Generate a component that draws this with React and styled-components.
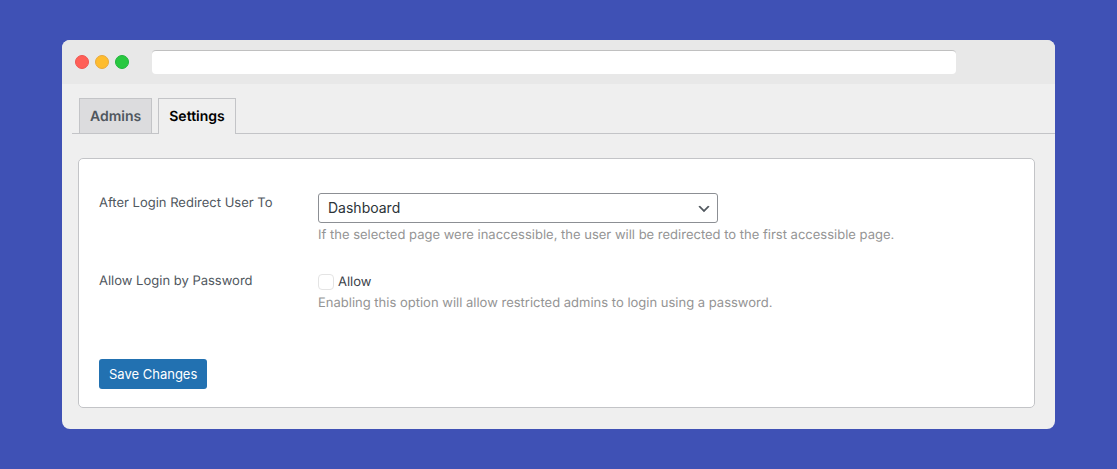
import React from "react";
import styled, { createGlobalStyle } from "styled-components";

const Global = createGlobalStyle`
  * { box-sizing: border-box; }
  body {
    margin: 0;
    background: #3f51b5;
    color: #3c434a;
    font-family: Inter, "Liberation Sans", sans-serif;
    font-size: 13px;
    line-height: 20px;
    text-rendering: geometricPrecision;
  }
`;

const Page = styled.main`
  padding: 40px 62px;
`;

const Browser = styled.section`
  background: #efefef;
  border-radius: 8px;
  overflow: hidden;
`;

const TitleBar = styled.header`
  display: flex;
  align-items: center;
  height: 44px;
  padding: 0 99px 0 13px;
  background: #e8e8e8;
`;

const Lights = styled.div`
  display: flex;
  gap: 6px;
  margin-right: 23px;
`;

const Light = styled.span`
  width: 14px;
  height: 14px;
  border: 1px solid ${(p) => p.$edge};
  border-radius: 50%;
  background: ${(p) => p.$color};
`;

const Address = styled.input`
  flex: 1;
  min-width: 0;
  height: 24px;
  padding: 0 8px;
  border: 0;
  border-top: 1px solid #c0c0c0;
  border-radius: 4px;
  background: #fff;
  font: inherit;
`;

const Tabs = styled.nav`
  display: flex;
  gap: 6px;
  margin-left: 10px;
  padding: 14px 7px 0;
  border-bottom: 1px solid #c3c4c7;
`;

const Tab = styled.a`
  height: ${(p) => (p.$active ? 36 : 35)}px;
  margin-bottom: ${(p) => (p.$active ? -1 : 0)}px;
  padding: 6px 10px;
  border: 1px solid #c3c4c7;
  border-bottom: 0;
  background: ${(p) => (p.$active ? "#efefef" : "#dcdcde")};
  color: ${(p) => (p.$active ? "#000" : "#50575e")};
  font-size: 14px;
  font-weight: 600;
  line-height: 24px;
  text-decoration: none;
`;

const Panel = styled.form`
  margin: 24px 20px 21px 16px;
  padding: 34px 20px 18px;
  border: 1px solid #c3c4c7;
  border-radius: 5px;
  background: #fff;
`;

const Row = styled.div`
  display: grid;
  grid-template-columns: 219px 1fr;
  margin-bottom: ${(p) => p.$gap}px;
`;

const RowLabel = styled.label`
  color: #50575e;
`;

const SelectWrap = styled.div`
  position: relative;
  max-width: 400px;
  margin-bottom: 2px;
`;

const Select = styled.select`
  display: block;
  width: 100%;
  height: 30px;
  padding: 0 24px 0 9px;
  appearance: none;
  border: 1px solid #8c8f94;
  border-radius: 3px;
  background: #fff;
  color: #2c3338;
  font: inherit;
  font-size: 14px;
`;

const Chevron = styled.svg`
  position: absolute;
  top: 8px;
  right: 6px;
  width: 16px;
  height: 16px;
  pointer-events: none;
`;

const Help = styled.p`
  margin: 0;
  color: #949494;
`;

const CheckLabel = styled.label`
  display: flex;
  align-items: center;
  gap: 4px;
  line-height: 22px;
`;

const Checkbox = styled.input`
  width: 16px;
  height: 16px;
  margin: 0;
  appearance: none;
  border: 1px solid #e4e4e4;
  border-radius: 4px;
  background: #fff;

  &:checked { background: #2271b1; }
`;

const Save = styled.button`
  display: block;
  height: 30px;
  padding: 0 10px;
  border: 0;
  border-radius: 3px;
  background: #2271b1;
  color: #fff;
  font: inherit;
`;

export default function App() {
  return (
    <Page>
      <Global />
      <Browser>
        <TitleBar>
          <Lights>
            <Light $color="#ff5f57" $edge="#ee5550" />
            <Light $color="#febc2e" $edge="#e9a93a" />
            <Light $color="#28c840" $edge="#20b43c" />
          </Lights>
          <Address type="text" aria-label="Address" />
        </TitleBar>
        <Tabs>
          <Tab href="#admins">Admins</Tab>
          <Tab href="#settings" $active aria-current="page">Settings</Tab>
        </Tabs>
        <Panel>
          <Row $gap={26}>
            <RowLabel htmlFor="redirect">After Login Redirect User To</RowLabel>
            <div>
              <SelectWrap>
                <Select id="redirect" defaultValue="Dashboard">
                  <option>Dashboard</option>
                </Select>
                <Chevron viewBox="0 0 20 20" aria-hidden="true">
                  <path d="M5 6l5 5 5-5 2 1-7 7-7-7z" fill="#50575e" />
                </Chevron>
              </SelectWrap>
              <Help>If the selected page were inaccessible, the user will be redirected to the first accessible page.</Help>
            </div>
          </Row>
          <Row $gap={46}>
            <RowLabel htmlFor="allow">Allow Login by Password</RowLabel>
            <div>
              <CheckLabel>
                <Checkbox id="allow" type="checkbox" />
                Allow
              </CheckLabel>
              <Help>Enabling this option will allow restricted admins to login using a password.</Help>
            </div>
          </Row>
          <Save type="button">Save Changes</Save>
        </Panel>
      </Browser>
    </Page>
  );
}
